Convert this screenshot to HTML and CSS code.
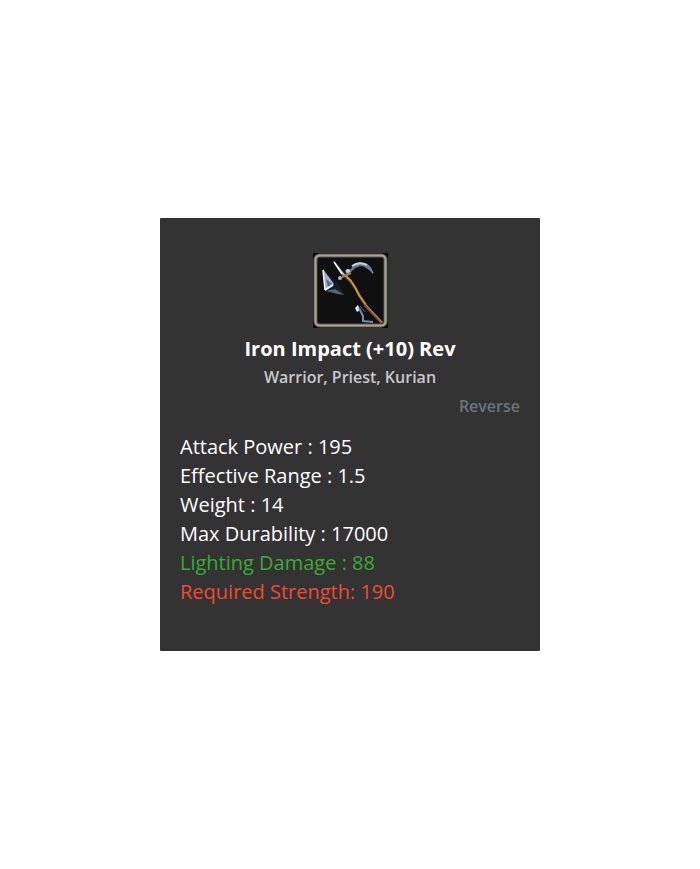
FILE: index.html
```html
<!DOCTYPE html>
<html lang="en">
<head>
<meta charset="UTF-8">
<meta name="viewport" content="width=device-width, initial-scale=1">
<title>Iron Impact (+10) Rev</title>
<link rel="stylesheet" href="styles.css">
</head>
<body>
<div class="item-card">
	<svg class="item-icon" viewBox="0 0 75 75" role="img" aria-label="Iron Impact">
		<defs>
			<filter id="soft"><feGaussianBlur stdDeviation="0.6"/></filter>
		</defs>
		<rect width="75" height="75" fill="#080808"/>
		<rect x="2.5" y="2.5" width="70" height="70" rx="4" fill="#101010" stroke="#5d5953" stroke-width="4"/>
		<rect x="2.5" y="2.5" width="70" height="70" rx="4" fill="none" stroke="#aaa598" stroke-width="2"/>
		<g filter="url(#soft)">
			<!-- back blade -->
			<path d="M15 21 L27 33 L31 42 L13 38 Z" fill="#171d29"/>
			<path d="M13 38 L22 36 L31 42 L25 41 Z" fill="#5d6969"/>
			<path d="M10 16 L21 31 L12 38 Z" fill="#9dadcb"/>
			<path d="M13 26 L19 31 L15 34 Z" fill="#526b99"/>
			<path d="M10 17 L12 37" stroke="#f4f7fc" stroke-width="1.5" fill="none"/>
			<path d="M12 37 L20 32" stroke="#f4f7fc" stroke-width="2" fill="none"/>
			<!-- spike -->
			<path d="M20 8 L22 9 L34 24 L30 23 Z" fill="#aab6cc"/>
			<path d="M21 9 L29 21" stroke="#edf0f5" stroke-width="1.5"/>
			<!-- hook -->
			<path d="M32 17 L38 16 L40 12 Q46 7 54 11 Q59 13 60 21 Q55 15 49 13 Q43 13 38 19 L33 21 Z" fill="#66758f"/>
			<path d="M39 13 Q46 8 54 12" stroke="#c5d2e8" stroke-width="2" fill="none"/>
			<path d="M54 12 L60 20" stroke="#7687ab" stroke-width="1.5"/>
			<circle cx="35" cy="18" r="2" fill="#c2d2e6"/>
			<circle cx="27" cy="25" r="2" fill="#b0b9b5"/>
			<!-- shaft -->
			<path d="M32 23 L38 29 Q43 35 46 42 L53 53" stroke="#4a3615" stroke-width="3" fill="none"/>
			<path d="M32 22 L38 28 Q43 35 46 42 L53 52" stroke="#c69a4b" stroke-width="2" fill="none"/>
			<path d="M29 24 L38 20" stroke="#a57e3a" stroke-width="2"/>
			<path d="M52 52 L69 70" stroke="#795240" stroke-width="3"/>
			<path d="M53 52 L69 69" stroke="#b89475" stroke-width="1"/>
			<!-- lower blade -->
			<path d="M42 55 L45 52 L47 57 L44 59 Z" fill="#e2e8f2"/>
			<path d="M46 55 L50 63 L50 68 L60 69" stroke="#7488a8" stroke-width="2" fill="none"/>
			<path d="M47 53 L52 59" stroke="#526786" stroke-width="1"/>
		</g>
	</svg>
	<h1 class="item-name">Iron Impact (+10) Rev</h1>
	<p class="item-class">Warrior, Priest, Kurian</p>
	<p class="item-type">Reverse</p>
	<ul class="item-stats">
		<li>Attack Power : 195</li>
		<li>Effective Range : 1.5</li>
		<li>Weight : 14</li>
		<li>Max Durability : 17000</li>
		<li class="bonus">Lighting Damage : 88</li>
		<li class="required">Required Strength: 190</li>
	</ul>
</div>
</body>
</html>
```

FILE: styles.css
```css
body {
	margin: 0;
	min-height: 100vh;
	display: flex;
	align-items: center;
	justify-content: center;
	background: #fff;
	font-family: "Open Sans", sans-serif;
}

.item-card {
	box-sizing: border-box;
	width: 100%;
	max-width: 380px;
	padding: 35px 20px 45px;
	background: #333;
	border-radius: 1px;
	color: #fff;
}

.item-icon {
	display: block;
	width: 75px;
	margin: 0 auto 6px;
}

.item-name {
	margin: 0;
	font-size: 20px;
	font-weight: 700;
	line-height: 29px;
	text-align: center;
}

.item-class,
.item-type {
	margin: 0;
	font-size: 16px;
	font-weight: 600;
	line-height: 29px;
}

.item-class {
	color: #c8c8c8;
	text-align: center;
}

.item-type {
	color: #6c757d;
	text-align: right;
}

.item-stats {
	margin: 11px 0 0;
	padding: 0;
	list-style: none;
	font-size: 20px;
	line-height: 29px;
}

.bonus {
	color: #3aaa35;
}

.required {
	color: #f04b32;
}
```
